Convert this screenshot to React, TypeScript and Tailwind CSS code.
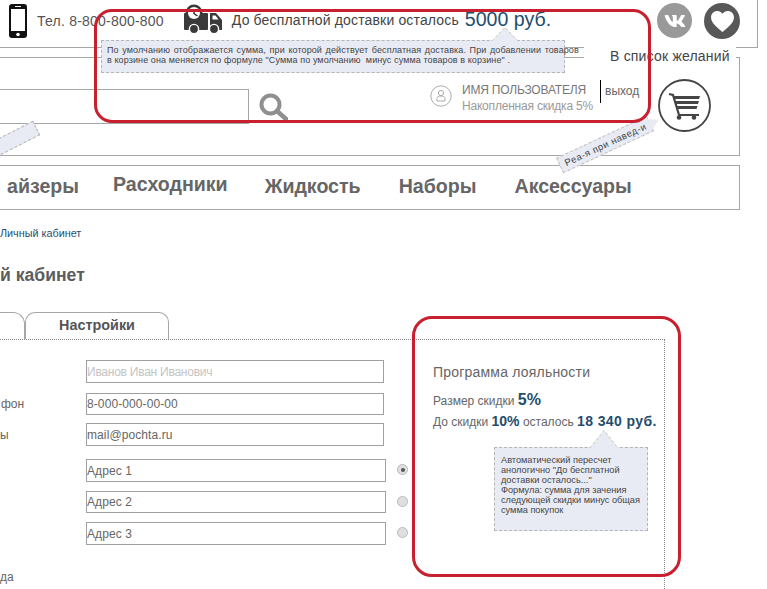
import type { ReactNode } from 'react'
import { FaVk } from 'react-icons/fa'

const line = 'border-[#a6a6a6]'

const Field = (props: { value: string; w: string; h: string; muted?: boolean }) => (
  <div
    className={`flex items-center border border-[#a0a0a0] text-[12px] ${props.w} ${props.h} ${props.muted ? 'text-[#c4c4c4] tracking-[-0.25px]' : 'text-[#666] tracking-[0.1px]'}`}
  >
    {props.value}
  </div>
)

const Row = (props: { label?: ReactNode; children: ReactNode }) => (
  <div className="flex items-center">
    <span className="w-[86px] text-[12px] text-[#666]">{props.label}</span>
    {props.children}
  </div>
)

const Radio = (props: { on?: boolean }) => (
  <span className="flex items-center justify-center ml-[11px] mb-[2px] w-[11px] h-[11px] rounded-full border border-[#bbb] bg-[#dfdfdf]">
    {props.on && <span className="w-[4px] h-[4px] rounded-full bg-[#555]" />}
  </span>
)

const PhoneIcon = () => (
  <svg width="18" height="34" viewBox="0 0 18 34">
    <rect width="18" height="34" rx="3" fill="#111" />
    <rect x="2" y="5" width="14" height="22" fill="#fff" />
    <circle cx="9" cy="30.5" r="1.8" fill="#fff" />
    <rect x="6" y="2" width="6" height="1" fill="#fff" />
  </svg>
)

const TruckIcon = () => (
  <svg width="39" height="30" viewBox="0 0 39 30">
    <rect x="0" y="9" width="24" height="17" rx="1" fill="#3a3a3a" />
    <circle cx="10" cy="9" r="8.5" fill="#3a3a3a" />
    <circle cx="10" cy="9" r="6" fill="#fff" />
    <path d="M10 5v4.5l3.5 2.5" stroke="#3a3a3a" strokeWidth="1.5" fill="none" />
    <path d="M26 9h6l6 7v10H26z" fill="#3a3a3a" />
    <path d="M28.5 11.5h3l3 4h-6z" fill="#fff" />
    <circle cx="10" cy="25" r="4.6" fill="#3a3a3a" stroke="#fff" strokeWidth="1.4" />
    <circle cx="30" cy="25" r="4.6" fill="#3a3a3a" stroke="#fff" strokeWidth="1.4" />
  </svg>
)

const SearchIcon = () => (
  <svg width="29" height="28" viewBox="0 0 29 28" fill="none">
    <circle cx="11.5" cy="11.5" r="9" stroke="#8f8f8f" strokeWidth="4" />
    <path d="M18 18l9 8" stroke="#8f8f8f" strokeWidth="4.5" strokeLinecap="round" />
  </svg>
)

const UserIcon = () => (
  <svg width="22" height="22" viewBox="0 0 22 22" fill="none" stroke="#adadad">
    <circle cx="11" cy="11" r="10.2" />
    <circle cx="11" cy="8" r="2.6" />
    <path d="M11 11c-2.500 0-4 .8-4 2.500V16h8v-2.500C15 11.800 13.500 11 11 11z" />
  </svg>
)

const CartIcon = () => (
  <svg width="53" height="53" viewBox="0 0 53 53" fill="none">
    <circle cx="26.500" cy="26.500" r="25.500" stroke="#444" strokeWidth="1.800" />
    <path d="M11 15l4 1 6 20h20" stroke="#444" strokeWidth="2.200" />
    <path d="M15 17h27l-1 3H16zM17 22h24l-1 3H18zM18.500 27h21l-1 3H20z" fill="#444" />
    <circle cx="21" cy="38.500" r="2.300" fill="#444" />
    <circle cx="36" cy="38.500" r="2.300" fill="#444" />
  </svg>
)

// хвостик заметки, пунктир как у самой заметки
const NoteTip = (props: { className: string; w: number; h: number }) => (
  <svg className={props.className} width={props.w} height={props.h} viewBox={`0 0 ${props.w} ${props.h}`}>
    <path
      d={`M0 ${props.h}L${props.w / 2} 0.500L${props.w} ${props.h}`}
      fill="#e9ebf4"
      stroke="#c4c4c4"
      strokeDasharray="3 2"
    />
  </svg>
)

const App = () => {
  return (
    <div className="relative w-[767px] h-[589px] overflow-hidden bg-white font-['Liberation_Sans',Arial,sans-serif] text-[#555]">
      {/* верхняя строка */}
      <div className={`flex items-start w-[758px] h-[48px] border-b border-r ${line}`}>
        <div className="ml-[9px] mt-[4px]">
          <PhoneIcon />
        </div>
        <span className="ml-[10px] mt-[11px] text-[14px] tracking-[0.22px]">Тел. 8-800-800-800</span>
        <div className="ml-[20px] mt-[4px]">
          <TruckIcon />
        </div>
        <span className="ml-[9px] mt-[10px] text-[14px] tracking-[0.15px] text-[#444]">
          До бесплатной доставки осталось
        </span>
        <span className="ml-[6px] mt-[5px] text-[19.6px] text-[#1f4e6e]">5000 руб.</span>
        <div className="ml-auto mr-[17px] mt-[3px] flex gap-[12px]">
          <span className="flex items-center justify-center w-[35px] h-[35px] rounded-full bg-[#999] text-white text-[22px]">
            <FaVk />
          </span>
          <span className="flex items-center justify-center w-[36px] h-[36px] rounded-full bg-[#585858]">
            <svg width="23" height="21" viewBox="0 0 24 22" fill="#fff">
              <path d="M12 22C5 16 0 12 0 6.500 0 2.800 3 0 6.500 0 8.800 0 10.800 1.100 12 3c1.200-1.900 3.200-3 5.500-3C21 0 24 2.800 24 6.500 24 12 19 16 12 22z" />
            </svg>
          </span>
        </div>
      </div>

      {/* поиск, пользователь, корзина */}
      <div className={`flex items-start mt-[9px] w-[740px] h-[99px] border-t border-b border-r ${line}`}>
        <div className={`w-[249px] h-[35px] mt-[31px] border-t border-b border-r ${line}`} />
        <div className="ml-[10px] mt-[35px]">
          <SearchIcon />
        </div>
        <div className="ml-[142px] mt-[27px]">
          <UserIcon />
        </div>
        <div className="ml-[10px] mt-[24px] text-[12px] leading-[16px] tracking-[-0.2px] text-[#777] w-[138px]">
          <div>ИМЯ ПОЛЬЗОВАТЕЛЯ</div>
          <div className="text-[#999]">Накопленная скидка 5%</div>
        </div>
        <div className="mt-[22px] h-[23px] border-l border-black pl-[4px] pt-[2px] text-[12px] text-[#666] w-[54px]">
          выход
        </div>
        <div className="ml-[4px] mt-[21px]">
          <CartIcon />
        </div>
      </div>

      {/* меню */}
      <nav className={`flex items-center gap-[38px] mt-[9px] pb-[2px] w-[740px] h-[45px] border-t border-b border-r ${line} text-[19.6px] font-bold text-[#666]`}>
        <span className="ml-[7px] -mr-[4px]">айзеры</span>
        <span className="-mt-[4px] -mr-[1px]">Расходники</span>
        <span>Жидкость</span>
        <span>Наборы</span>
        <span>Аксессуары</span>
      </nav>

      <div className="mt-[17px] text-[10.8px] leading-[12px] text-[#1f4e6e]">Личный кабинет</div>
      <h1 className="mt-[24px] text-[17.6px] leading-[24px] font-bold text-[#5c5c5c]">й кабинет</h1>

      {/* вкладки */}
      <div className="flex mt-[25px] h-[27px]">
        <div className={`w-[25px] border-t border-r ${line} rounded-tr-[12px]`} />
        <div className={`flex items-center justify-center w-[144px] border-t border-l border-r ${line} rounded-t-[10px] text-[14.4px] font-bold text-[#555]`}>
          Настройки
        </div>
      </div>

      {/* форма и программа лояльности */}
      <div className="flex w-[665px] h-[250px] border-t border-r border-dotted border-[#888]">
        <div className="w-[433px] pt-[20px]">
          <div className="flex flex-col">
            <Row>
              <Field value="Иванов Иван Иванович" w="w-[298px]" h="h-[23px]" muted />
            </Row>
            <div className="mt-[10px]">
              <Row label={<span className="pl-[1px]">фон</span>}>
                <Field value="8-000-000-00-00" w="w-[298px]" h="h-[22px]" />
              </Row>
            </div>
            <div className="mt-[8px]">
              <Row label="ы">
                <Field value="mail@pochta.ru" w="w-[298px]" h="h-[23px]" />
              </Row>
            </div>
          </div>
          <div className="flex flex-col gap-[9px] mt-[13px]">
            <Row>
              <Field value="Адрес 1" w="w-[300px]" h="h-[23px]" />
              <Radio on />
            </Row>
            <Row>
              <Field value="Адрес 2" w="w-[300px]" h="h-[22px]" />
              <Radio />
            </Row>
            <Row>
              <Field value="Адрес 3" w="w-[300px]" h="h-[23px]" />
              <Radio />
            </Row>
          </div>
          <div className="mt-[24px] text-[12px] leading-[16px] text-[#666]">да</div>
        </div>
        <div className="flex-1 pt-[23px]">
          <h2 className="text-[14px] leading-[18px] text-[#666] tracking-[0.2px]">Программа лояльности</h2>
          <p className="mt-[9px] text-[12px] leading-[20px] text-[#666]">
            Размер скидки <b className="text-[16px] text-[#1f4e6e]">5%</b>
          </p>
          <p className="text-[12px] leading-[20px] text-[#666] whitespace-nowrap">
            До скидки <b className="text-[14px] text-[#1f4e6e]">10%</b> осталось{' '}
            <b className="text-[14px] tracking-[0.4px] text-[#1f4e6e]">18 340 руб.</b>
          </p>
        </div>
      </div>

      {/* белая плашка под "В список желаний" */}
      <div className="absolute left-[584px] top-[40px] w-[152px] h-[26px] bg-white pl-[26px] pt-[8px] text-[14px] leading-[16px] text-[#444] tracking-[0.2px] whitespace-nowrap">
        В список желаний
      </div>

      {/* заметка про доставку */}
      <div className="absolute left-[101px] top-[40px] w-[464px] h-[33px] border border-dashed border-[#b5b5b5] bg-[#e9ebf4] pl-[5px] pt-[4px] text-[9px] leading-[10px] text-[#444] whitespace-pre">
        <div className="tracking-[0.1px] [word-spacing:1px]">По умолчанию отображается сумма, при которой действует бесплатная доставка. При добавлении товаров</div>
        <div className="tracking-[0.1px]">в корзине она меняется по формуле "Сумма по умолчанию  минус сумма товаров в корзине" .</div>
      </div>
      <NoteTip className="absolute left-[492px] top-[27px]" w={26} h={14} />

      {/* заметка про скидку */}
      <div className="absolute left-[494px] top-[447px] w-[154px] h-[84px] border border-dashed border-[#b5b5b5] bg-[#e9ebf4] pl-[6px] pt-[7px] text-[9.2px] leading-[10px] text-[#444] whitespace-nowrap">
        <div>Автоматический пересчет</div>
        <div>анологично "До бесплатной</div>
        <div>доставки осталось..."</div>
        <div>Формула: сумма для зачения</div>
        <div>следующей скидки минус общая</div>
        <div>сумма покупок</div>
      </div>
      <NoteTip className="absolute left-[590px] top-[430px]" w={28} h={18} />

      {/* повёрнутые заметки */}
      <div className="absolute left-[-39px] top-[138px] w-[80px] h-[16px] -rotate-[27deg] border border-dashed border-[#b5b5b5] bg-[#e9ebf4]" />
      <div className="absolute left-[555px] top-[136px] w-[100px] h-[17px] -rotate-[25deg] border border-dashed border-[#c0c0c0] bg-[#e9ebf4] pl-[5px] text-[9.5px] leading-[15px] tracking-[0.5px] text-[#444] whitespace-nowrap">
        Реа-я при навед-и
        <span className="absolute right-[-10px] top-[2px] w-0 h-0 border-y-[6px] border-y-transparent border-l-[10px] border-l-[#e9ebf4]" />
      </div>

      {/* красные рамки */}
      <div className="absolute left-[94px] top-[9px] w-[557px] h-[114px] rounded-[18px] border-[3px] border-[#c8202e]" />
      <div className="absolute left-[412px] top-[316px] w-[269px] h-[261px] rounded-[20px] border-[3px] border-[#c8202e]" />
    </div>
  )
}

export default App
